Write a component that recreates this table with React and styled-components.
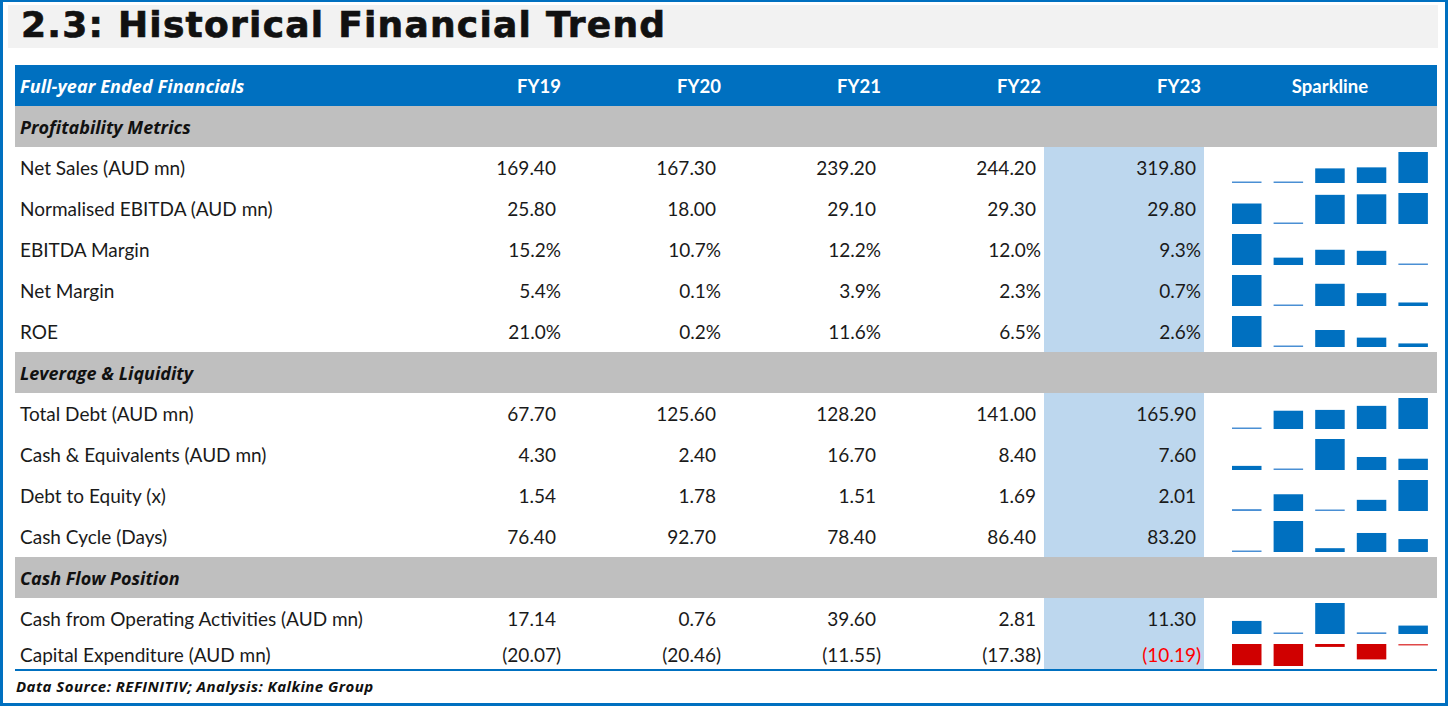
import React from "react";
import styled, { createGlobalStyle } from "styled-components";

const GlobalStyle = createGlobalStyle`
  html, body { margin: 0; padding: 0; background: #ffffff; }
  * { box-sizing: border-box; }
`;

const BLUE = "#0070C0";
const COLS = "389px repeat(5, 160px) 233px";
const BODY_FONT = `"Lato", "Liberation Sans", sans-serif`;
const EMPH_FONT = `"Open Sans", "Lato", "Liberation Sans", sans-serif`;

const Frame = styled.div`
  width: 1448px;
  height: 706px;
  border: 3px solid ${BLUE};
  border-top-width: 2px;
  padding: 3px 7px 0 5px;
  font-family: ${BODY_FONT};
  color: #1a1a1a;
`;

const TitleBar = styled.div`
  height: 43px;
  background: #f2f2f2;
  display: flex;
  align-items: center;
  padding: 0 0 3px 13px;
`;

const Title = styled.h1`
  margin: 0;
  font-family: "DejaVu Sans", "Inter", sans-serif;
  font-weight: 700;
  font-size: 36px;
  letter-spacing: 1.25px;
  -webkit-text-stroke: 0.7px #111;
  color: #111;
  line-height: 1;
`;

const Table = styled.div`
  margin: 17px 0 0 7px;
  width: 1422px;
  border-bottom: 2px solid ${BLUE};
`;

const Row = styled.div`
  display: grid;
  grid-template-columns: ${COLS};
  height: ${(p) => p.$h || 41}px;
  align-items: stretch;
`;

const HeaderRow = styled(Row)`
  background: ${BLUE};
  color: #ffffff;
  font-weight: 700;
  font-size: 18.5px;
`;

const SectionRow = styled.div`
  height: 41px;
  background: #bfbfbf;
  display: flex;
  align-items: center;
  padding-left: 5px;
  font-family: ${EMPH_FONT};
  font-weight: 700;
  font-style: italic;
  font-size: 18px;
  letter-spacing: 0;
  color: #111;
`;

const Cell = styled.div`
  display: flex;
  align-items: center;
  font-size: 19px;
`;

const LabelCell = styled(Cell)`
  padding-left: 5px;
  font-family: ${(p) => (p.$italic ? EMPH_FONT : BODY_FONT)};
  font-style: ${(p) => (p.$italic ? "italic" : "normal")};
  font-size: ${(p) => (p.$italic ? "18px" : "19px")};
  letter-spacing: ${(p) => (p.$italic ? "0.1px" : "0")};
`;

const ValueCell = styled(Cell)`
  justify-content: flex-end;
  padding-right: 3px;
  background: ${(p) => (p.$hl ? "#BDD7EE" : "transparent")};
  color: ${(p) => (p.$red ? "#ff0000" : "inherit")};
  font-size: ${(p) => (p.$head ? "18.5px" : "19px")};
`;

const Pad = styled.span`
  visibility: hidden;
`;

const SparkHead = styled(Cell)`
  justify-content: center;
  padding-left: 19px;
  font-size: 18.5px;
`;

const SparkCell = styled.div`
  display: block;
  line-height: 0;
`;

const Footer = styled.div`
  margin: 5px 0 0 8px;
  font-family: ${EMPH_FONT};
  font-weight: 700;
  font-style: italic;
  font-size: 15px;
  letter-spacing: 0.45px;
  color: #111;
`;

const sections = [
  {
    title: "Profitability Metrics",
    rows: [
      ["Net Sales (AUD mn)", [169.4, 167.3, 239.2, 244.2, 319.8], "num"],
      ["Normalised EBITDA (AUD mn)", [25.8, 18.0, 29.1, 29.3, 29.8], "num"],
      ["EBITDA Margin", [15.2, 10.7, 12.2, 12.0, 9.3], "pct"],
      ["Net Margin", [5.4, 0.1, 3.9, 2.3, 0.7], "pct"],
      ["ROE", [21.0, 0.2, 11.6, 6.5, 2.6], "pct"],
    ],
  },
  {
    title: "Leverage & Liquidity",
    rows: [
      ["Total Debt (AUD mn)", [67.7, 125.6, 128.2, 141.0, 165.9], "num"],
      ["Cash & Equivalents (AUD mn)", [4.3, 2.4, 16.7, 8.4, 7.6], "num"],
      ["Debt to Equity (x)", [1.54, 1.78, 1.51, 1.69, 2.01], "num"],
      ["Cash Cycle (Days)", [76.4, 92.7, 78.4, 86.4, 83.2], "num"],
    ],
  },
  {
    title: "Cash Flow Position",
    rows: [
      ["Cash from Operating Activities (AUD mn)", [17.14, 0.76, 39.6, 2.81, 11.3], "num"],
      ["Capital Expenditure (AUD mn)", [-20.07, -20.46, -11.55, -17.38, -10.19], "num", 30],
    ],
  },
];

function formatValue(v, kind) {
  if (kind === "pct") return { text: `${v.toFixed(1)}%`, pad: false };
  if (v < 0) return { text: `(${Math.abs(v).toFixed(2)})`, pad: false };
  return { text: v.toFixed(2), pad: true };
}

function Sparkline({ values, height }) {
  const min = Math.min(...values);
  const max = Math.max(...values);
  const allNeg = max < 0;
  const top = 5;
  const area = height === 41 ? 31 : 22;
  const range = max - min || 1;
  return (
    <svg width="233" height={height} viewBox={`0 0 233 ${height}`}>
      {values.map((v, i) => {
        const frac = allNeg ? (max - v) / range : (v - min) / range;
        const h = Math.max(1.5, frac * area);
        const thin = frac * area < 2;
        const x = 28 + i * 41.6;
        const y = allNeg ? top : top + area - h;
        const color = allNeg ? (thin ? "#e04848" : "#d00000") : thin ? "#4a8fd4" : BLUE;
        return <rect key={i} x={x} y={y} width={29.5} height={h} fill={color} />;
      })}
    </svg>
  );
}

export default function App() {
  return (
    <>
      <GlobalStyle />
      <Frame>
        <TitleBar>
          <Title>2.3: Historical Financial Trend</Title>
        </TitleBar>
        <Table>
          <HeaderRow>
            <LabelCell $italic>Full-year Ended Financials</LabelCell>
            {["FY19", "FY20", "FY21", "FY22", "FY23"].map((y) => (
              <ValueCell key={y} $head>
                {y}
              </ValueCell>
            ))}
            <SparkHead>Sparkline</SparkHead>
          </HeaderRow>
          {sections.map((s) => (
            <React.Fragment key={s.title}>
              <SectionRow>{s.title}</SectionRow>
              {s.rows.map(([label, vals, kind, h]) => (
                <Row key={label} $h={h || 41}>
                  <LabelCell>{label}</LabelCell>
                  {vals.map((v, i) => {
                    const f = formatValue(v, kind);
                    return (
                      <ValueCell key={i} $hl={i === 4} $red={i === 4 && v < 0}>
                        {f.text}
                        {f.pad && <Pad>)</Pad>}
                      </ValueCell>
                    );
                  })}
                  <SparkCell>
                    <Sparkline values={vals} height={h || 41} />
                  </SparkCell>
                </Row>
              ))}
            </React.Fragment>
          ))}
        </Table>
        <Footer>Data Source: REFINITIV; Analysis: Kalkine Group</Footer>
      </Frame>
    </>
  );
}
